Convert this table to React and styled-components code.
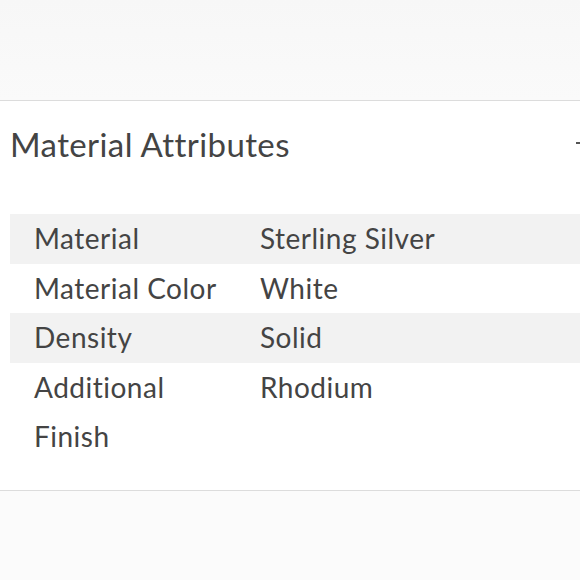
import React from "react";
import styled, { createGlobalStyle } from "styled-components";

const Global = createGlobalStyle`
  html, body { margin: 0; padding: 0; background: #fbfbfb; overflow: hidden; }
  body { font-family: Lato, "Open Sans", sans-serif; color: #444; }
`;

const Page = styled.div`
  width: 580px;
  height: 580px;
  overflow: hidden;
  background: #fbfbfb;
`;

const TopBand = styled.div`
  height: 100px;
  background: linear-gradient(#f7f7f7, #fafafa);
`;

const Section = styled.section`
  width: 606px;
  background: #fff;
  border-top: 1px solid #dcdcdc;
  border-bottom: 1px solid #dcdcdc;
  padding: 0 0 28px 10px;
  box-sizing: border-box;
`;

const Header = styled.div`
  display: flex;
  align-items: center;
  justify-content: space-between;
  height: 90px;
  padding-right: 16px;
`;

const Title = styled.h2`
  margin: 0;
  font-family: Lato, sans-serif;
  font-weight: 400;
  font-size: 33px;
  color: #444;
  letter-spacing: 0.4px;
  transform: translateY(-2px);
`;

const Minus = styled.span`
  display: block;
  width: 14px;
  height: 2px;
  background: #555;
  transform: translateY(-3px);
`;

const Table = styled.div`
  margin-top: 23px;
  display: grid;
  grid-template-columns: 226px 1fr;
`;

const Row = styled.div`
  display: contents;
  & > div {
    background: ${(p) => (p.$shaded ? "#f2f2f2" : "#fff")};
  }
`;

const Cell = styled.div`
  font-family: Lato, sans-serif;
  font-size: 28px;
  line-height: 49.5px;
  letter-spacing: 0.5px;
  color: #444;
  padding: 0 ${(p) => (p.$label ? "8px" : "0")} 0 24px;
`;

const rows = [
  ["Material", "Sterling Silver"],
  ["Material Color", "White"],
  ["Density", "Solid"],
  ["Additional Finish", "Rhodium"],
];

export default function App() {
  return (
    <Page>
      <Global />
      <TopBand />
      <Section>
        <Header>
          <Title>Material Attributes</Title>
          <Minus />
        </Header>
        <Table>
          {rows.map(([k, v], i) => (
            <Row key={k} $shaded={i % 2 === 0}>
              <Cell $label>{k}</Cell>
              <Cell>{v}</Cell>
            </Row>
          ))}
        </Table>
      </Section>
    </Page>
  );
}
